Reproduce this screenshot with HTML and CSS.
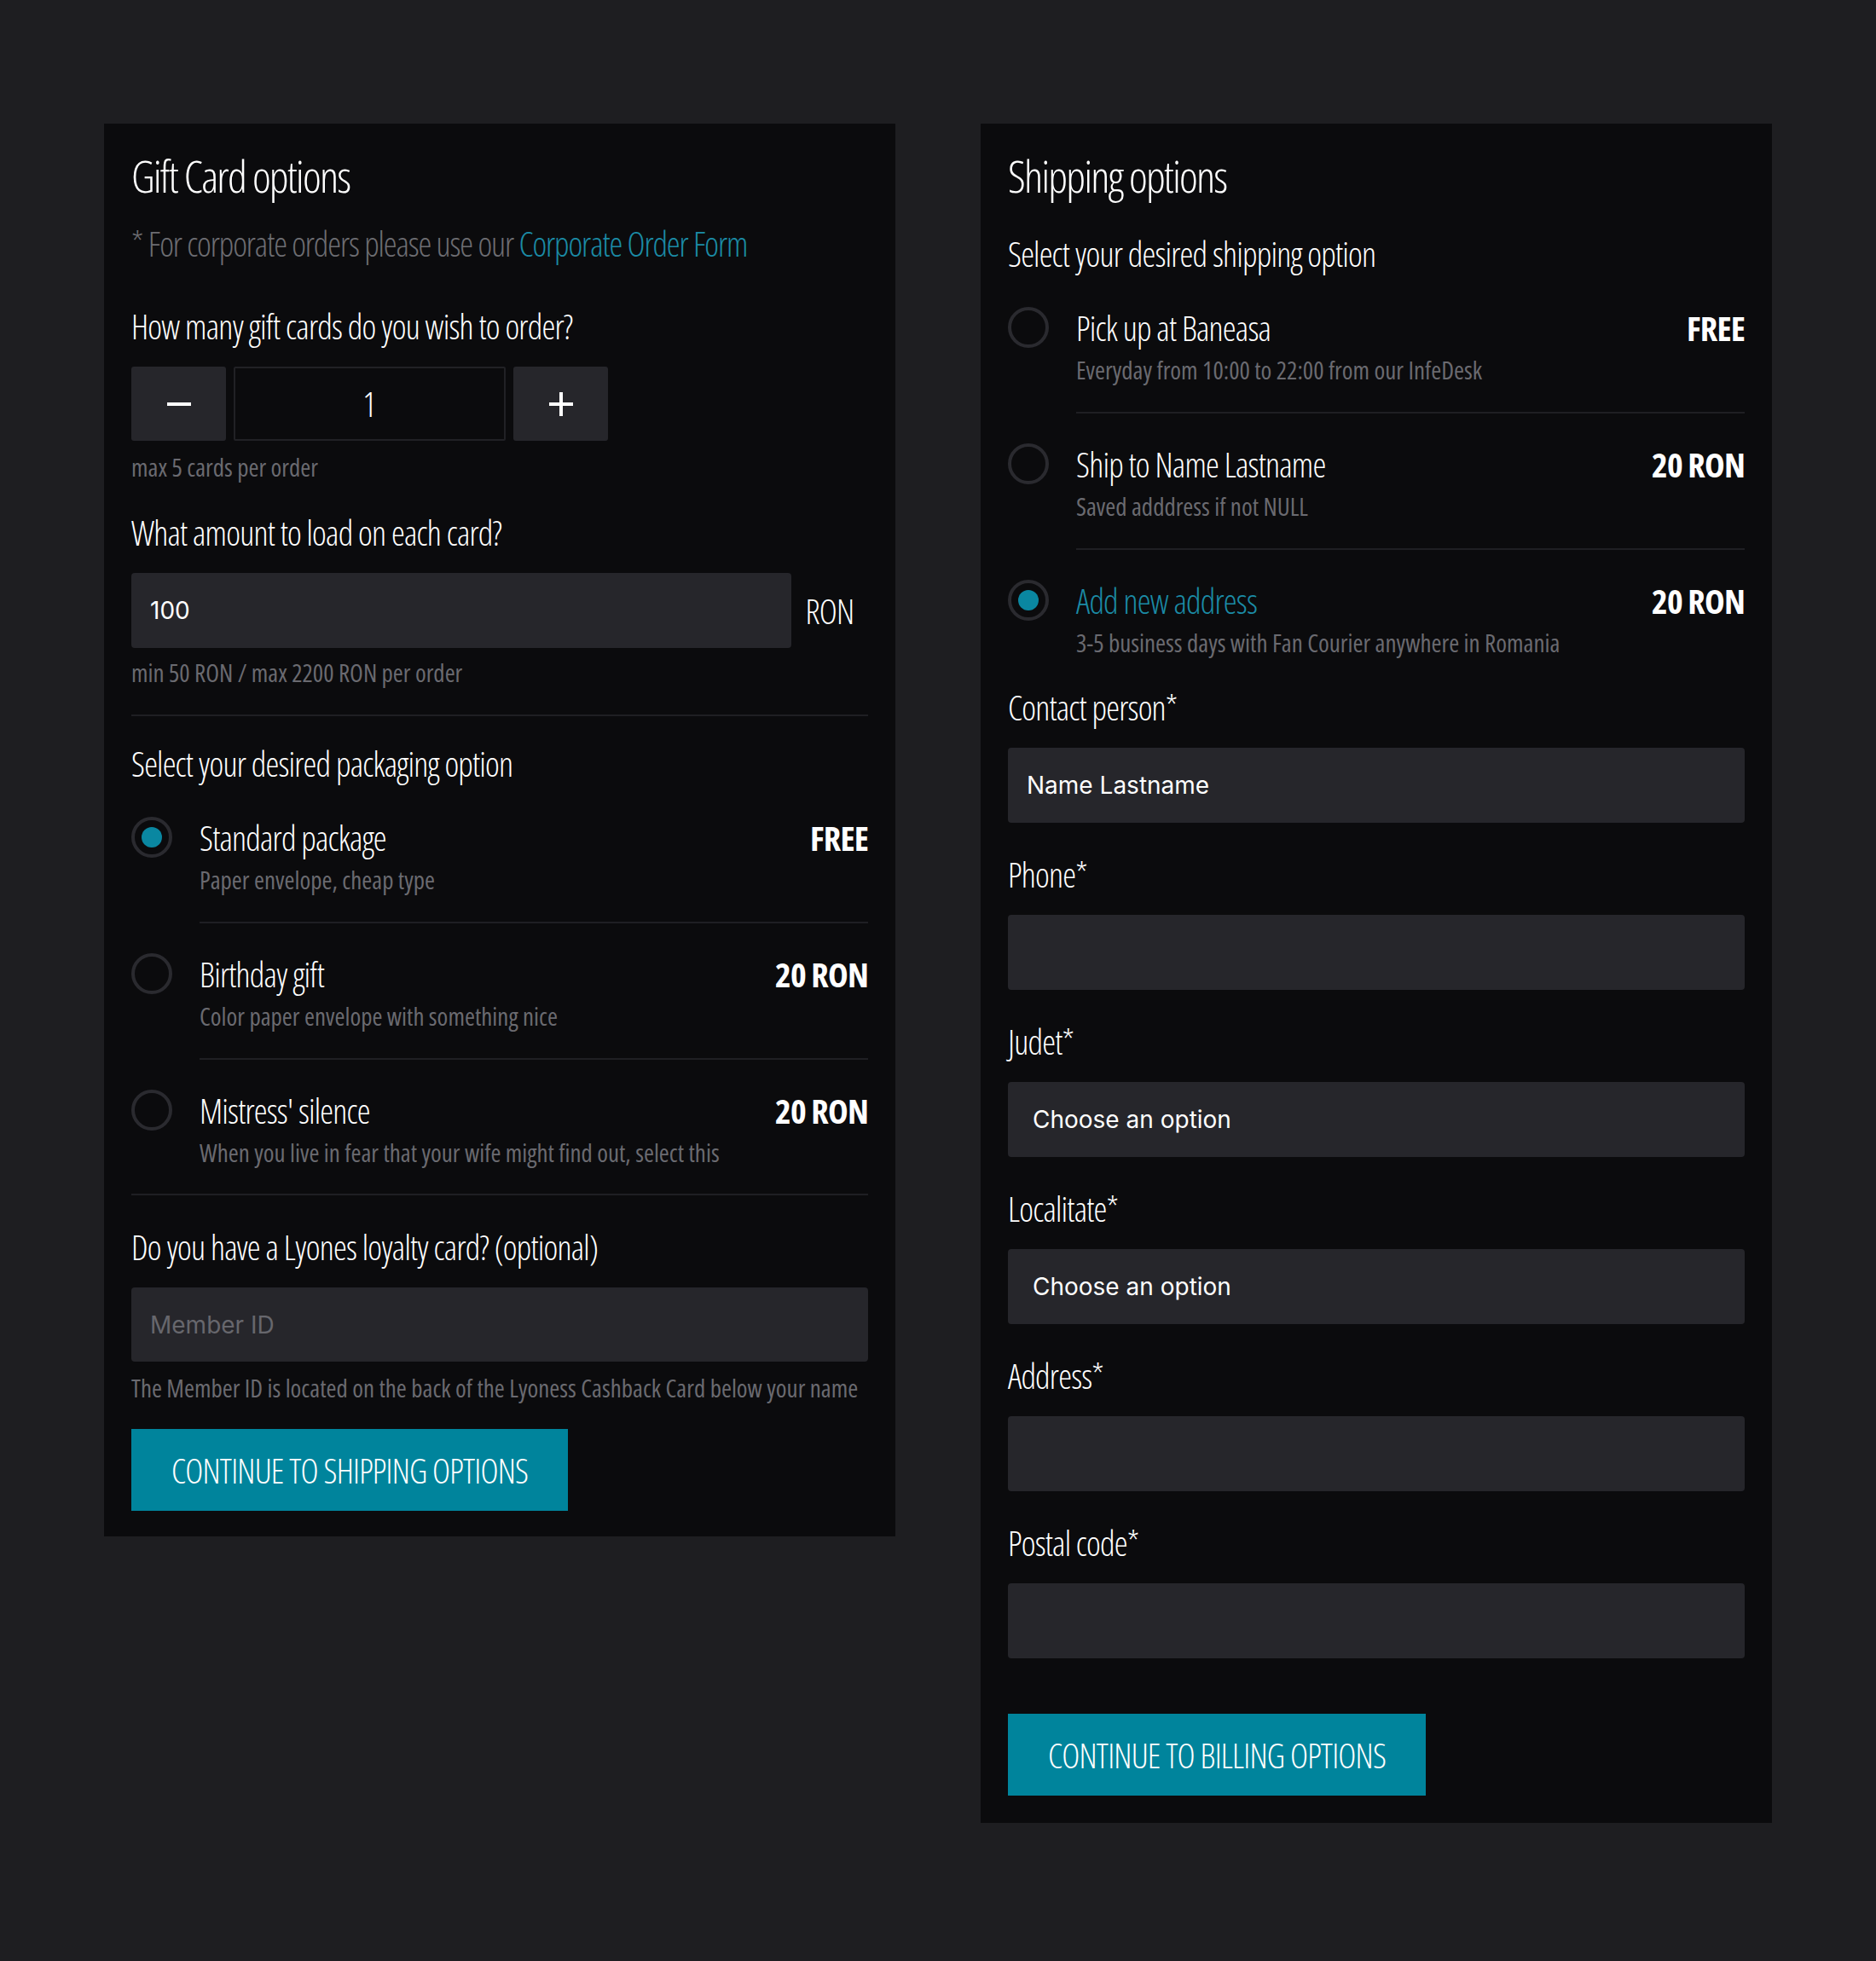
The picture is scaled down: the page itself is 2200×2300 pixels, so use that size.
FILE: index.html
```html
<!DOCTYPE html>
<html lang="en">
<head>
    <meta charset="UTF-8">
    <meta name="viewport" content="width=device-width, initial-scale=1.0">
    <title>Gift Card checkout</title>
    <link rel="stylesheet" href="styles.css">
</head>
<body>

    <div class="page">

        <!-- Gift card options -->
        <section class="panel">
            <h1 class="panel-title">Gift Card options</h1>
            <p class="note">* For corporate orders please use our <a href="#">Corporate Order Form</a></p>

            <label class="q">How many gift cards do you wish to order?</label>
            <div class="stepper">
                <button class="step" type="button" aria-label="Less">
                    <svg width="28" height="28" viewBox="0 0 28 28"><path d="M0 14h28" stroke="#fff" stroke-width="4"/></svg>
                </button>
                <div class="step-value">1</div>
                <button class="step" type="button" aria-label="More">
                    <svg width="28" height="28" viewBox="0 0 28 28"><path d="M14 0v28M0 14h28" stroke="#fff" stroke-width="4"/></svg>
                </button>
            </div>
            <p class="hint">max 5 cards per order</p>

            <label class="q">What amount to load on each card?</label>
            <div class="amount">
                <input class="field-input" type="text" value="100">
                <span class="unit">RON</span>
            </div>
            <p class="hint">min 50 RON / max 2200 RON per order</p>

            <div class="divider"></div>

            <label class="q">Select your desired packaging option</label>
            <div class="options">
                <div class="option">
                    <span class="radio checked"></span>
                    <div class="option-body">
                        <div class="option-head">
                            <span class="option-name">Standard package</span>
                            <span class="price">FREE</span>
                        </div>
                        <p class="option-desc">Paper envelope, cheap type</p>
                    </div>
                </div>
                <div class="option">
                    <span class="radio"></span>
                    <div class="option-body">
                        <div class="option-head">
                            <span class="option-name">Birthday gift</span>
                            <span class="price">20 RON</span>
                        </div>
                        <p class="option-desc">Color paper envelope with something nice</p>
                    </div>
                </div>
                <div class="option">
                    <span class="radio"></span>
                    <div class="option-body">
                        <div class="option-head">
                            <span class="option-name">Mistress' silence</span>
                            <span class="price">20 RON</span>
                        </div>
                        <p class="option-desc">When you live in fear that your wife might find out, select this</p>
                    </div>
                </div>
            </div>

            <div class="divider"></div>

            <label class="q">Do you have a Lyones loyalty card? (optional)</label>
            <input class="field-input member" type="text" placeholder="Member ID">
            <p class="hint">The Member ID is located on the back of the Lyoness Cashback Card below your name</p>

            <button class="btn" type="button">CONTINUE TO SHIPPING OPTIONS</button>
        </section>

        <!-- Shipping options -->
        <section class="panel panel-shipping">
            <h1 class="panel-title">Shipping options</h1>
            <label class="q">Select your desired shipping option</label>
            <div class="options">
                <div class="option">
                    <span class="radio"></span>
                    <div class="option-body">
                        <div class="option-head">
                            <span class="option-name">Pick up at Baneasa</span>
                            <span class="price">FREE</span>
                        </div>
                        <p class="option-desc">Everyday from 10:00 to 22:00 from our InfeDesk</p>
                    </div>
                </div>
                <div class="option">
                    <span class="radio"></span>
                    <div class="option-body">
                        <div class="option-head">
                            <span class="option-name">Ship to Name Lastname</span>
                            <span class="price">20 RON</span>
                        </div>
                        <p class="option-desc">Saved adddress if not NULL</p>
                    </div>
                </div>
                <div class="option">
                    <span class="radio checked"></span>
                    <div class="option-body">
                        <div class="option-head">
                            <span class="option-name active">Add new address</span>
                            <span class="price">20 RON</span>
                        </div>
                        <p class="option-desc">3-5 business days with Fan Courier anywhere in Romania</p>
                    </div>
                </div>
            </div>

            <label class="field-label">Contact person*</label>
            <input class="field-input" type="text" value="Name Lastname">

            <label class="field-label">Phone*</label>
            <input class="field-input" type="text">

            <label class="field-label">Judet*</label>
            <select class="field-input field-select">
                <option>Choose an option</option>
            </select>

            <label class="field-label">Localitate*</label>
            <select class="field-input field-select">
                <option>Choose an option</option>
            </select>

            <label class="field-label">Address*</label>
            <input class="field-input" type="text">

            <label class="field-label">Postal code*</label>
            <input class="field-input" type="text">

            <button class="btn btn-billing" type="button">CONTINUE TO BILLING OPTIONS</button>
        </section>

    </div>

</body>
</html>
```
FILE: styles.css
```css
body { margin: 0; background: #1e1e21; color: #fff; font-family: "Open Sans", sans-serif; font-stretch: condensed; }
p { margin: 0; }
.page { display: flex; align-items: flex-start; gap: 100px; padding: 145px 122px; }
.panel { width: 928px; box-sizing: border-box; padding: 32px 32px 30px; background: #0b0b0d; }
.panel-shipping { padding-bottom: 32px; }

.panel-title { margin: 3px 0 0; font-size: 52px; font-weight: 300; line-height: 1; letter-spacing: -1.8px; }
.note { margin-top: 34px; font-size: 40px; font-weight: 300; line-height: 1; letter-spacing: -1.1px; color: #6d6d72; }
.note a { color: #1b8ba6; text-decoration: none; }

.q { display: block; margin-top: 43px; font-size: 40px; font-weight: 300; line-height: 1; letter-spacing: -0.8px; }
.note + .q { margin-top: 57px; }
.panel-title + .q { margin-top: 46px; }
.divider + .q { margin-top: 0; }

.hint { margin-top: 17px; font-size: 29px; font-weight: 500; line-height: 28px; color: #6a6a70; white-space: nowrap; }
.amount + .hint { margin-top: 15px; }

.stepper { display: flex; gap: 9px; height: 87px; margin-top: 27px; }
.step { display: flex; align-items: center; justify-content: center; width: 111px; padding: 0; border: none; border-radius: 3px; background: #26262b; cursor: pointer; }
.step-value { display: flex; align-items: center; justify-content: center; width: 319px; box-sizing: border-box; border: 2px solid #212125; border-radius: 2px; font-size: 40px; font-weight: 300; }

.amount { display: flex; align-items: center; margin-top: 27px; }
.amount .field-input { flex: 1; margin-top: 0; }
.unit { width: 90px; text-align: center; font-size: 40px; font-weight: 300; letter-spacing: -0.8px; }

.field-input { display: block; width: 100%; height: 88px; box-sizing: border-box; margin-top: 27px; padding: 0 22px; border: none; border-radius: 4px; outline: none; background: #26262b; color: #fff; font-family: Inter, sans-serif; font-size: 28px; }
.field-input::placeholder { color: #67676d; }
.member { height: 87px; }
.field-select { padding-left: 29px; appearance: none; -webkit-appearance: none; }

.divider { height: 2px; margin: 35px 0 36px; background: #1f1f23; }
.options + .divider { margin: 34px 0 41px; }

.options { margin-top: 42px; }
.option { display: flex; gap: 32px; }
.option + .option { margin-top: 35px; }
.radio { flex: none; display: flex; align-items: center; justify-content: center; width: 48px; height: 48px; box-sizing: border-box; border: 4px solid #2a2a2f; border-radius: 50%; }
.radio.checked::after { content: ""; width: 24px; height: 24px; border-radius: 50%; background: #0a87a1; }
.option-body { flex: 1; padding: 5px 0 35px; border-bottom: 2px solid #1f1f23; }
.option:last-child .option-body { padding-bottom: 0; border-bottom: none; }
.option-head { display: flex; justify-content: space-between; font-size: 40px; line-height: 1; }
.option-name { font-weight: 300; letter-spacing: -0.8px; }
.option-name.active { color: #1b8ba6; }
.price { font-weight: 700; letter-spacing: -0.8px; }
.option-desc { margin-top: 15px; font-size: 29px; font-weight: 500; line-height: 28px; color: #6a6a70; }

.field-label { display: block; margin-top: 41px; font-size: 40px; font-weight: 300; line-height: 1; letter-spacing: -0.8px; }
.options + .field-label { margin-top: 42px; }

.btn { display: block; height: 96px; margin-top: 34px; padding: 0 47px; border: none; background: #00849c; color: #fff; font-family: "Open Sans", sans-serif; font-stretch: condensed; font-size: 40px; font-weight: 300; letter-spacing: -0.8px; cursor: pointer; }
.btn-billing { margin-top: 65px; }
```
